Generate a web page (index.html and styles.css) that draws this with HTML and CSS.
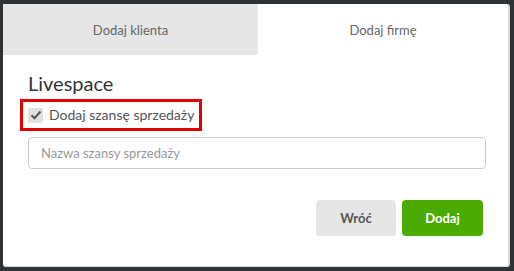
FILE: index.html
```html
<!DOCTYPE html>
<html lang="pl">
<head>
<meta charset="utf-8">
<link rel="stylesheet" href="styles.css">
</head>
<body>
<div class="modal">
  <div class="tabs">
    <div class="tab inactive">Dodaj klienta</div>
    <div class="tab active">Dodaj firmę</div>
  </div>
  <div class="content">
    <h2 class="title">Livespace</h2>
    <div class="highlight">
      <label class="check">
        <span class="box"><svg width="12" height="10" viewBox="0 0 12 10"><path d="M1.5 5.2 L4.5 8.2 L10.5 1.5" fill="none" stroke="#555" stroke-width="2"/></svg></span>
        <span class="label-text">Dodaj szansę sprzedaży</span>
      </label>
    </div>
    <div class="input">Nazwa szansy sprzedaży</div>
    <div class="actions">
      <button class="btn back">Wróć</button>
      <button class="btn primary">Dodaj</button>
    </div>
  </div>
</div>
</body>
</html>
```
FILE: styles.css
```css
html, body {
  margin: 0;
  padding: 0;
}
body {
  background: #2f3234;
  font-family: Lato, "Open Sans", sans-serif;
  width: 514px;
  height: 271px;
  overflow: hidden;
  padding: 4px 0 0 3px;
  box-sizing: border-box;
}
.modal {
  width: 505px;
  height: 262px;
  background: #fff;
  border-right: 2px solid #d9d9d9;
  border-bottom: 1px solid #d9d9d9;
  border-radius: 0 3px 3px 3px;
  overflow: hidden;
  box-sizing: content-box;
}
.tabs {
  display: flex;
  height: 51px;
}
.tab {
  display: flex;
  align-items: center;
  justify-content: center;
  font-size: 13px;
  color: #666;
}
.tab.inactive {
  width: 255px;
  background: #e6e6e6;
  border-bottom-right-radius: 2px;
}
.tab.active {
  flex: 1;
  background: #fff;
}
.content {
  padding: 16px 22px 0 25px;
}
.title {
  margin: 0;
  font-weight: 400;
  font-size: 20px;
  color: #333;
  line-height: 24px;
}
.highlight {
  display: inline-flex;
  margin: 4px 0 0 -8px;
  border: 3px solid #e50000;
  padding: 3px 5px 3px 5px;
}
.check {
  display: flex;
  align-items: center;
  gap: 6px;
}
.box {
  width: 15px;
  height: 15px;
  background: #e0e0e0;
  border-radius: 2px;
  display: flex;
  align-items: center;
  justify-content: center;
}
.label-text {
  font-size: 14px;
  color: #555;
  line-height: 20px;
}
.input {
  margin-top: 6px;
  height: 32px;
  width: 458px;
  border: 1px solid #ccc;
  border-radius: 4px;
  box-sizing: border-box;
  padding: 0 12px;
  display: flex;
  align-items: center;
  font-size: 13px;
  color: #999;
}
.actions {
  display: flex;
  justify-content: flex-end;
  gap: 6px;
  margin-top: 31px;
  padding-right: 3px;
}
.btn {
  height: 36px;
  border: none;
  border-radius: 4px;
  font-family: Lato, sans-serif;
  font-weight: 700;
  font-size: 13px;
  width: 80px;
}
.btn.back {
  background: #e6e6e6;
  color: #555;
}
.btn.primary {
  background: #4cab00;
  color: #fff;
  width: 81px;
}
```
